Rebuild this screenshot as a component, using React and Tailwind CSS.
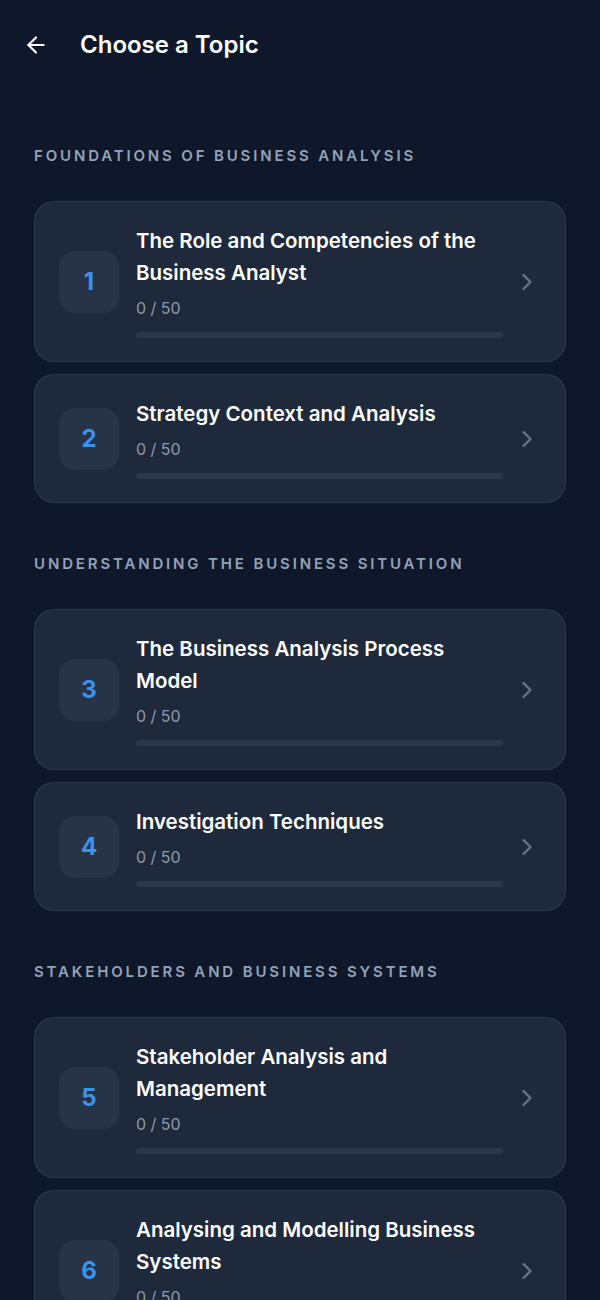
import { ArrowLeft, ChevronRight } from "lucide-react"

const sections = [
  {
    title: "Foundations of Business Analysis",
    topics: [
      { n: 1, name: "The Role and Competencies of the Business Analyst" },
      { n: 2, name: "Strategy Context and Analysis" },
    ],
  },
  {
    title: "Understanding the Business Situation",
    topics: [
      { n: 3, name: "The Business Analysis Process Model" },
      { n: 4, name: "Investigation Techniques" },
    ],
  },
  {
    title: "Stakeholders and Business Systems",
    topics: [
      { n: 5, name: "Stakeholder Analysis and Management" },
      { n: 6, name: "Analysing and Modelling Business Systems" },
    ],
  },
]

function TopicCard({ topic }) {
  const done = 0
  const total = 50
  return (
    <button className="w-full text-left flex items-center px-6 py-[23px] rounded-[20px] bg-[#1e293b] border border-[#334155]/70">
      <div className="w-[60px] h-[62px] shrink-0 mr-[17px] rounded-2xl bg-[#273447] flex items-center justify-center text-[24px] font-bold text-[#3b93f0]">
        {topic.n}
      </div>
      <div className="flex-1 min-w-0">
        <div className="text-[20.5px] leading-8 font-semibold text-white">{topic.name}</div>
        <div className="mt-[7px] text-base leading-6 text-[#8e9aab]">{done} / {total}</div>
        <div className="mt-3 h-1.5 rounded-full bg-[#2a374a]">
          <div className="h-full rounded-full bg-[#3b82f6]" style={{ width: `${(done / total) * 100}%` }} />
        </div>
      </div>
      <ChevronRight size={28} strokeWidth={2} className="shrink-0 ml-[10px] text-[#64748b]" />
    </button>
  )
}

export default function App() {
  return (
    <div className="min-h-screen bg-[#0f172a] font-['Inter',sans-serif]">
      <header className="h-[90px] px-6 flex items-center gap-[31px]">
        <ArrowLeft size={26} strokeWidth={2} className="text-white -ml-px" />
        <h1 className="text-2xl font-semibold text-white">Choose a Topic</h1>
      </header>

      <main className="px-[34px] pt-14 pb-10 flex flex-col gap-[51px]">
        {sections.map(s => (
          <section key={s.title}>
            <h2 className="text-[15px] leading-5 font-semibold uppercase tracking-[0.19em] text-[#94a3b8] mb-[35px]">{s.title}</h2>
            <div className="flex flex-col gap-3">
              {s.topics.map(t => <TopicCard key={t.n} topic={t} />)}
            </div>
          </section>
        ))}
      </main>
    </div>
  )
}
